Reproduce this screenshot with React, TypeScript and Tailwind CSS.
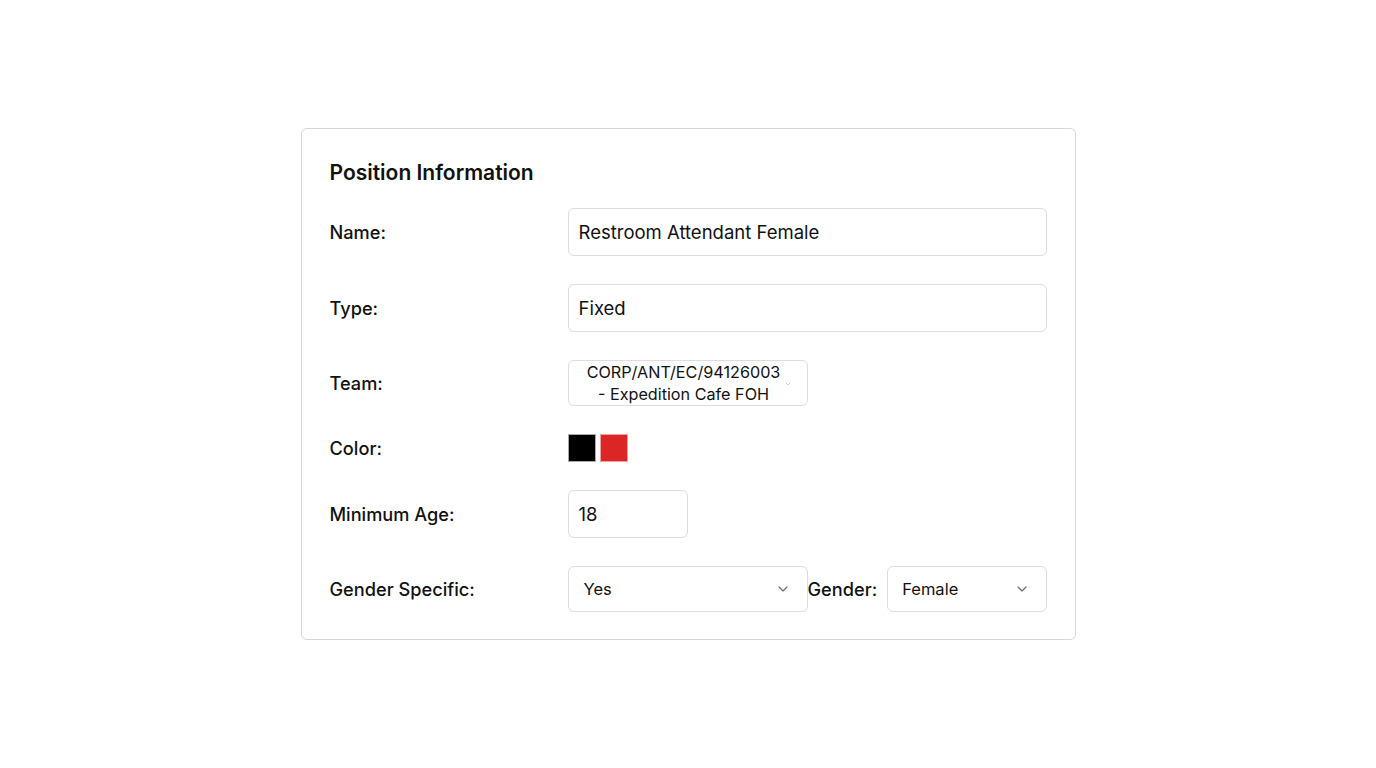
import { ChevronDown } from "lucide-react"

const font = { fontFamily: "Inter, 'Noto Sans', sans-serif" }

function Label({ children }: { children: React.ReactNode }) {
  return <div className="text-[18.2px] font-medium leading-[28px] text-[#111]">{children}</div>
}

export default function App() {
  return (
    <div className="min-h-screen w-full bg-white pt-[128px]" style={font}>
      <div className="mx-auto w-[775px] rounded-md border border-[#d5d5de] bg-white px-[28px] pt-[30px] pb-[27px]">
        <h2 className="text-[21px] font-semibold leading-[28px] text-[#111]">Position Information</h2>

        <div className="mt-[21px] flex flex-col gap-[28px]">
          {/* Name */}
          <div className="grid grid-cols-[238px_1fr] items-center">
            <Label>Name:</Label>
            <div className="flex h-[48px] items-center rounded-md border border-[#dcdce2] px-[10px] pt-[2px] text-[18.5px] text-[#111]">
              Restroom Attendant Female
            </div>
          </div>

          {/* Type */}
          <div className="grid grid-cols-[238px_1fr] items-center">
            <Label>Type:</Label>
            <div className="flex h-[48px] items-center rounded-md border border-[#dcdce2] px-[10px] pt-[2px] text-[18.5px] text-[#111]">
              Fixed
            </div>
          </div>

          {/* Team */}
          <div className="grid grid-cols-[238px_1fr] items-center">
            <Label>Team:</Label>
            <div className="relative flex h-[46px] w-[240px] items-center justify-center rounded-md border border-[#dcdce2] pr-[8px] text-center text-[16.2px] leading-[22px] text-[#111]">
              <span>
                CORP/ANT/EC/94126003
                <br />- Expedition Cafe FOH
              </span>
              <ChevronDown className="absolute right-[15px] top-[19px] h-[8px] w-[8px] text-[#9a9aa2]" strokeWidth={1.5} />
            </div>
          </div>

          {/* Color */}
          <div className="grid grid-cols-[238px_1fr] items-center">
            <Label>Color:</Label>
            <div className="flex gap-[4px]">
              <div className="h-[28px] w-[28px] border border-[#a8a8a8] bg-black" />
              <div className="h-[28px] w-[28px] border border-[#f0a0a0] bg-[#dc2626]" />
            </div>
          </div>

          {/* Minimum Age */}
          <div className="grid grid-cols-[238px_1fr] items-center">
            <Label>Minimum Age:</Label>
            <div className="flex h-[48px] w-[120px] items-center rounded-md border border-[#dcdce2] px-[10px] pt-[2px] text-[18.5px] text-[#111]">
              18
            </div>
          </div>

          {/* Gender Specific */}
          <div className="grid grid-cols-[238px_1fr] items-center">
            <Label>Gender Specific:</Label>
            <div className="flex items-center">
              <div className="flex h-[46px] w-[240px] items-center justify-between rounded-md border border-[#dcdce2] pl-[15px] pr-[16px] text-[16.5px] text-[#111]">
                <span>Yes</span>
                <ChevronDown className="h-[16px] w-[16px] text-[#6b6b73]" strokeWidth={1.75} />
              </div>
              <div className="ml-[0px] mr-[10px]">
                <Label>Gender:</Label>
              </div>
              <div className="flex h-[46px] flex-1 items-center justify-between rounded-md border border-[#dcdce2] pl-[14px] pr-[16px] text-[16.5px] text-[#111]">
                <span>Female</span>
                <ChevronDown className="h-[16px] w-[16px] text-[#6b6b73]" strokeWidth={1.75} />
              </div>
            </div>
          </div>
        </div>
      </div>
    </div>
  )
}
